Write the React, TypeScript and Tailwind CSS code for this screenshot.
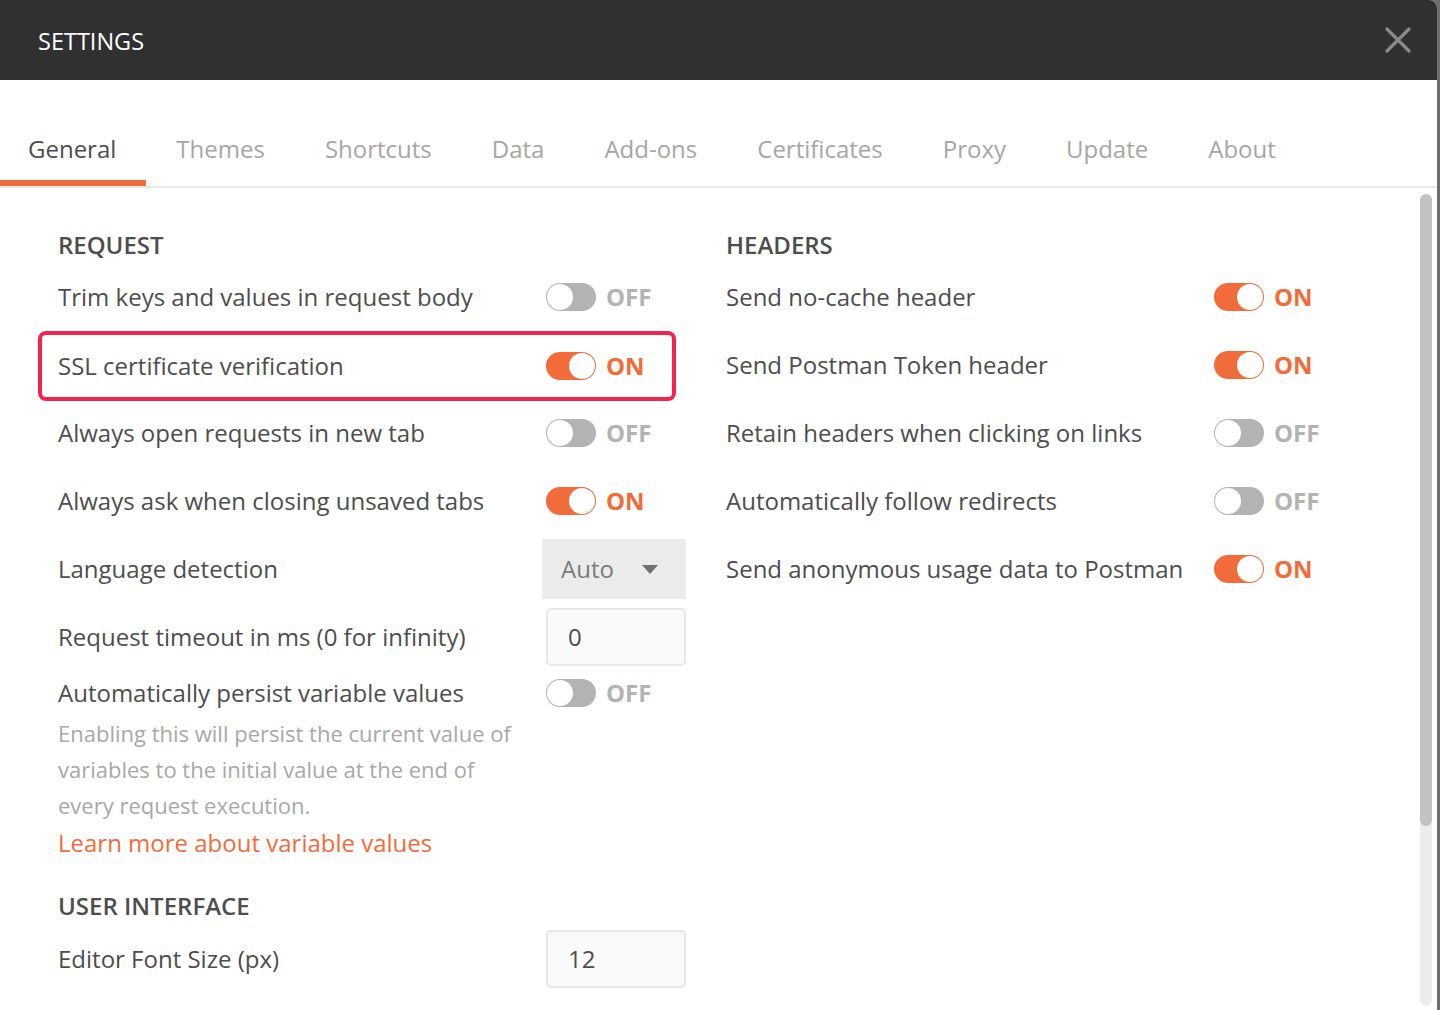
import React from "react";

const tabs = [
  "General",
  "Themes",
  "Shortcuts",
  "Data",
  "Add-ons",
  "Certificates",
  "Proxy",
  "Update",
  "About",
];

function Toggle({ on }: { on: boolean }) {
  return (
    <div className="flex items-center gap-[10px]">
      <div
        className={
          on
            ? "w-[50px] h-[28px] rounded-full bg-[#f26b3a] flex items-center justify-end p-[1px]"
            : "w-[50px] h-[28px] rounded-full bg-[#b3b3b3] flex items-center justify-start p-[1px]"
        }
      >
        <div className="w-[26px] h-[26px] rounded-full bg-white" />
      </div>
      <span
        className={
          on
            ? "text-[24px] font-bold text-[#f26b3a] leading-none"
            : "text-[24px] font-bold text-[#b3b3b3] leading-none"
        }
      >
        {on ? "ON" : "OFF"}
      </span>
    </div>
  );
}

function Row({
  label,
  children,
  wide,
}: {
  label: string;
  children: React.ReactNode;
  wide?: boolean;
}) {
  return (
    <div className="h-[68px] flex items-center">
      <div className="flex-1 text-[24px] text-[#4d4d4d] whitespace-nowrap">{label}</div>
      <div className={wide ? "w-[106px]" : "w-[140px]"}>{children}</div>
    </div>
  );
}

function NumberBox({ value }: { value: string }) {
  return (
    <div className="h-[58px] w-[140px] rounded-[5px] border-2 border-[#e8e8e8] bg-[#fafafa] flex items-center pl-[20px] text-[24px] text-[#4d4d4d]">
      {value}
    </div>
  );
}

export default function App() {
  return (
    <div
      className="w-[1440px] h-[1010px] flex bg-[#6e6e6e] overflow-hidden"
      style={{ fontFamily: "'Open Sans', 'Noto Sans', sans-serif" }}
    >
      <div className="w-[1437px] h-full flex flex-col bg-white rounded-tr-[8px] overflow-hidden">
        {/* header */}
        <div className="h-[80px] bg-[#303030] flex items-center justify-between pl-[38px] pr-[26px] shrink-0">
          <span className="text-[23.5px] text-white mt-[3px]">SETTINGS</span>
          <svg width="26" height="26" viewBox="0 0 26 26">
            <path
              d="M2 2 L24 24 M24 2 L2 24"
              stroke="#8a8a8a"
              strokeWidth="3.2"
              strokeLinecap="round"
            />
          </svg>
        </div>

        {/* tabs */}
        <div className="h-[108px] flex items-end border-b-2 border-[#e8e8e8] shrink-0">
          {tabs.map((t, i) => (
            <div
              key={t}
              className={
                i === 0
                  ? "pl-[28px] pr-[30px] flex flex-col"
                  : "px-[30px] flex flex-col"
              }
            >
              <span
                className={
                  i === 0
                    ? "text-[24px] leading-[32px] text-[#4d4d4d] pb-[15px]"
                    : "text-[24px] leading-[32px] text-[#a6a6a6] pb-[15px]"
                }
              >
                {t}
              </span>
              <div
                className={
                  i === 0
                    ? "h-[6px] bg-[#f26b3a] -ml-[28px] -mr-[30px]"
                    : "h-[6px]"
                }
              />
            </div>
          ))}
        </div>

        {/* body */}
        <div className="flex-1 flex min-h-0">
          <div className="flex-1 flex gap-[40px] pl-[58px] pt-[39px]">
            {/* left column */}
            <div className="w-[628px] flex flex-col">
              <div className="h-[36px] flex items-center text-[24px] font-semibold text-[#4d4d4d]">
                REQUEST
              </div>
              <Row label="Trim keys and values in request body">
                <Toggle on={false} />
              </Row>
              <div className="h-[70px] -mb-[2px] flex items-center -ml-[20px] mr-[10px] pl-[16px] border-[4px] border-[#f5234b] rounded-[8px]">
                <div className="flex-1 text-[24px] text-[#4d4d4d]">
                  SSL certificate verification
                </div>
                <div className="w-[126px]">
                  <Toggle on={true} />
                </div>
              </div>
              <Row label="Always open requests in new tab">
                <Toggle on={false} />
              </Row>
              <Row label="Always ask when closing unsaved tabs">
                <Toggle on={true} />
              </Row>
              <Row label="Language detection">
                <div className="h-[60px] w-[144px] -ml-[4px] bg-[#ebebeb] flex items-center justify-between pl-[19px] pr-[28px]">
                  <span className="text-[24px] text-[#7a7a7a]">Auto</span>
                  <svg width="16" height="9" viewBox="0 0 16 9">
                    <path d="M0 0 L16 0 L8 9 Z" fill="#707070" />
                  </svg>
                </div>
              </Row>
              <Row label="Request timeout in ms (0 for infinity)">
                <NumberBox value="0" />
              </Row>
              <div className="h-[44px] flex items-center">
                <div className="flex-1 text-[24px] text-[#4d4d4d]">
                  Automatically persist variable values
                </div>
                <div className="w-[140px]">
                  <Toggle on={false} />
                </div>
              </div>
              <p className="w-[462px] text-[22px] leading-[36px] text-[#a8a8a8]">
                Enabling this will persist the current value of variables to the
                initial value at the end of every request execution.
              </p>
              <div className="h-[40px] flex items-center text-[24px] text-[#f26b3a]">
                Learn more about variable values
              </div>
              <div className="mt-[25px] h-[36px] flex items-center text-[24px] font-semibold text-[#4d4d4d]">
                USER INTERFACE
              </div>
              <div className="h-[70px] flex items-center">
                <div className="flex-1 text-[24px] text-[#4d4d4d]">Editor Font Size (px)</div>
                <div className="w-[140px]">
                  <NumberBox value="12" />
                </div>
              </div>
            </div>

            {/* right column */}
            <div className="w-[594px] flex flex-col">
              <div className="h-[36px] flex items-center text-[24px] font-semibold text-[#4d4d4d]">
                HEADERS
              </div>
              <Row label="Send no-cache header" wide>
                <Toggle on={true} />
              </Row>
              <Row label="Send Postman Token header" wide>
                <Toggle on={true} />
              </Row>
              <Row label="Retain headers when clicking on links" wide>
                <Toggle on={false} />
              </Row>
              <Row label="Automatically follow redirects" wide>
                <Toggle on={false} />
              </Row>
              <Row label="Send anonymous usage data to Postman" wide>
                <Toggle on={true} />
              </Row>
            </div>
          </div>

          {/* scrollbar */}
          <div className="w-[12px] mr-[5px] mt-[6px] mb-[4px] rounded-full bg-[#ececec] flex flex-col">
            <div className="h-[632px] rounded-full bg-[#c2c2c2]" />
          </div>
        </div>
      </div>
      <div className="flex-1" />
    </div>
  );
}
